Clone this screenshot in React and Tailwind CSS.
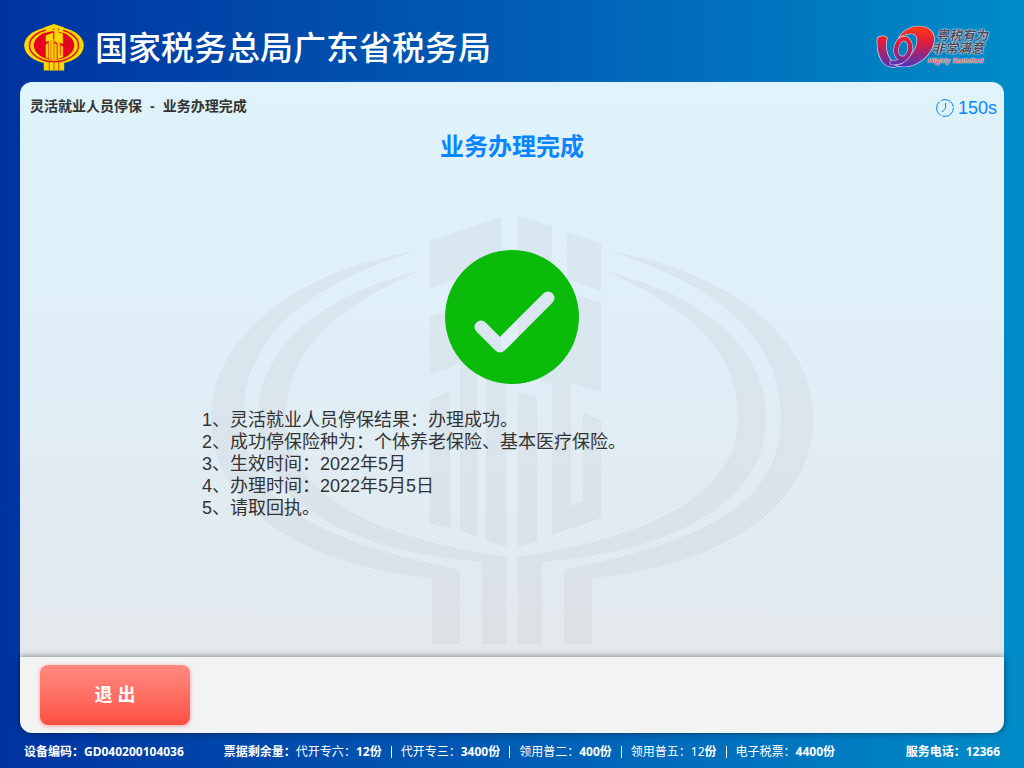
import React from 'react'

const RESULTS = [
  '1、灵活就业人员停保结果：办理成功。',
  '2、成功停保险种为：个体养老保险、基本医疗保险。',
  '3、生效时间：2022年5月',
  '4、办理时间：2022年5月5日',
  '5、请取回执。',
]

const TICKETS = [
  { label: '代开专六', count: '12' },
  { label: '代开专三', count: '3400' },
  { label: '领用普二', count: '400' },
  { label: '领用普五', count: '12', light: true },
  { label: '电子税票', count: '4400' },
]

// One half of the rings plus the two stems, drawn around x = 512
const HALF =
  'M608 251C725 270 813 335 813 418C813 500 735 563 592 578V644H564V570C700 542 781 505 781 418C781 340 720 285 608 251Z' +
  'M608 272C700 295 766 345 766 418C766 500 680 550 542 562V644H518V557C660 536 738 490 738 418C738 350 690 310 608 272Z'

// The 税 glyph in the middle of the emblem
const PILLARS =
  'M430 241L501 217V264L430 288Z' +
  'M518 215L552 226V385L518 372Z' +
  'M567 232L601 243V291L567 279Z' +
  'M430 317L501 292V348L506 350V547L486 540V358L477 361V538L460 529V364L430 374Z' +
  'M430 400L450 391V529L430 523Z' +
  'M518 392L537 398V541L518 547Z' +
  'M552 287L601 303V392L571 383V506L583 501V413L601 420V518L552 535Z'

function EmblemShape() {
  return (
    <>
      <path d={PILLARS} />
      <path d={HALF} />
      <path d={HALF} transform="matrix(-1 0 0 1 1024 0)" />
    </>
  )
}

function Emblem() {
  return (
    <svg className="h-[47px] w-[60px] shrink-0" viewBox="206 208 612 442" preserveAspectRatio="none" aria-hidden="true">
      <ellipse cx="512" cy="410" rx="304" ry="176" fill="#f8d800" />
      <path d="M408 240L512 208L616 240V646H408Z" fill="#f8d800" />
      <ellipse cx="512" cy="410" rx="250" ry="152" fill="none" stroke="#e01020" strokeWidth="15" />
      <ellipse cx="512" cy="410" rx="206" ry="134" fill="#e60020" />
      <path d="M420 556L464 570V640M512 560V640M604 556L560 570V640" fill="none" stroke="#e04010" strokeWidth="10" />
      <g fill="#f8d800" stroke="#f8d800" strokeWidth="5">
        <path d={PILLARS} />
      </g>
    </svg>
  )
}

function SatisfiedLogo() {
  return (
    <div className="flex items-center">
      <svg className="h-11 w-[60px]" viewBox="44 42 178 132" aria-hidden="true">
        <defs>
          <linearGradient id="swirl" x1="0" y1="48" x2="0" y2="168" gradientUnits="userSpaceOnUse">
            <stop offset="0" stopColor="#ff3818" />
            <stop offset="0.4" stopColor="#dc1c3c" />
            <stop offset="1" stopColor="#4a34c0" />
          </linearGradient>
        </defs>
        <g fill="url(#swirl)" stroke="#e4dcf0" strokeWidth="4" strokeLinejoin="round" paintOrder="stroke">
          <path d="M47 86C46 76 68 72 76 80C68 106 76 138 92 152C98 160 108 162 118 158C108 170 84 172 70 160C52 144 46 112 47 86Z" />
          <path d="M112 80C124 58 148 46 172 46C204 47 220 66 217 90C213 126 174 166 126 167C112 167 98 162 94 156C128 158 158 130 166 98C170 76 160 64 144 68C130 69 120 74 112 80Z" />
        </g>
        <g fill="none" strokeLinecap="round">
          <path d="M92 155C134 156 150 122 144 98C136 74 112 80 105 106C99 130 110 146 128 142" stroke="#e4dcf0" strokeWidth="16" />
          <path d="M92 155C134 156 150 122 144 98C136 74 112 80 105 106C99 130 110 146 128 142" stroke="url(#swirl)" strokeWidth="13" />
        </g>
      </svg>
      <div className="-ml-2 flex flex-col italic">
        <span className="pl-2 text-[13px] leading-[13px] font-bold text-[#4c4a5c] [text-shadow:0_0_1px_#fff,0_0_2px_#fff]">
          粤税有为
        </span>
        <span className="pl-1 text-[13px] leading-[13px] font-bold text-[#4c4a5c] [text-shadow:0_0_1px_#fff,0_0_2px_#fff]">
          非常满意
        </span>
        <span className="text-[8px] leading-[11px] text-[#e8203c] [text-shadow:0_0_1px_#fff,0_0_1px_#fff,0_0_2px_#fff]">
          Highly Satisfied
        </span>
      </div>
    </div>
  )
}

function SuccessIcon() {
  return (
    <svg className="size-[134px]" viewBox="0 0 134 134" role="img" aria-label="办理成功">
      <mask id="tick">
        <rect width="134" height="134" fill="#fff" />
        <path d="M36 77L55 96L103 48" fill="none" stroke="#000" strokeWidth="13" strokeLinecap="round" strokeLinejoin="round" />
      </mask>
      <circle cx="67" cy="67" r="67" fill="#0abb0a" mask="url(#tick)" />
    </svg>
  )
}

export default function App() {
  return (
    <div className="flex min-h-screen flex-col bg-linear-to-r from-[#0033a0] via-[#005cb4] to-[#008cc8] font-['Liberation_Sans','Noto_Sans_CJK_SC',sans-serif]">
      {/* Header */}
      <header className="flex h-[82px] shrink-0 items-center justify-between pr-9 pl-6">
        <div className="flex items-center gap-[11px] pt-3">
          <Emblem />
          <h1 className="pt-1 text-[33px] leading-10 font-medium text-white">国家税务总局广东省税务局</h1>
        </div>
        <div className="pt-3">
          <SatisfiedLogo />
        </div>
      </header>

      {/* Card */}
      <main className="mx-5 flex flex-1 flex-col">
        <section className="relative flex flex-1 flex-col overflow-hidden rounded-t-xl bg-linear-to-b from-[#dbf2fb] via-[#dcecf6] to-[#e0e5e9]">
          <div className="absolute inset-0 bg-[linear-gradient(135deg,#ffffff70_0_12%,transparent_12%_38%,#ffffff70_38%_62%,transparent_62%_88%,#ffffff70_88%)] bg-[length:4px_4px]" />
          <svg className="absolute bottom-3 left-1/2 h-[430px] w-[602px] -translate-x-1/2" viewBox="211 215 602 430" aria-hidden="true">
            <g fill="#bcbcc2" fillOpacity="0.16">
              <EmblemShape />
            </g>
          </svg>

          <div className="relative flex h-12 items-center justify-between pr-[7px] pl-[10px]">
            <p className="flex gap-2 text-sm font-bold text-[#333]">
              <span>灵活就业人员停保</span>
              <span>-</span>
              <span>业务办理完成</span>
            </p>
            <div className="flex items-center gap-1 pt-1 text-lg leading-6 text-[#0a84ff]">
              <svg className="size-[18px]" viewBox="0 0 18 18" fill="none" stroke="currentColor" aria-hidden="true">
                <circle cx="9" cy="9" r="8.4" strokeDasharray="16 1.6" />
                <path d="M9.5 4V9.5L6 13" />
              </svg>
              <span>150s</span>
            </div>
          </div>

          <h2 className="relative text-center text-2xl leading-[34px] font-bold text-[#0a84ff]">业务办理完成</h2>

          <div className="relative mt-[86px] flex justify-center">
            <SuccessIcon />
          </div>

          <ul className="relative mx-auto mt-[25px] w-full max-w-[620px] text-lg leading-[22px] text-[#333]">
            {RESULTS.map((line) => (
              <li key={line}>{line}</li>
            ))}
          </ul>
        </section>

        <div className="relative flex h-[76px] shrink-0 items-center rounded-b-xl bg-[#f2f4f4] px-5 shadow-[0_0_6px_rgba(0,0,0,0.5)]">
          <button
            type="button"
            className="h-[60px] w-[150px] rounded-lg bg-linear-to-b from-[#ff8a80] to-[#ff4e44] text-lg font-bold text-white shadow-[0_1px_4px_rgba(255,78,68,0.5)]"
          >
            退 出
          </button>
        </div>
      </main>

      {/* Status line */}
      <footer className="flex h-[35px] shrink-0 items-center px-6 pt-[2px] font-['Noto_Sans','Noto_Sans_CJK_SC',sans-serif] text-xs text-white">
        <span className="font-bold">设备编码：GD040200104036</span>
        <div className="ml-10 flex items-center">
          <span className="font-bold">票据剩余量：</span>
          {TICKETS.map((t, i) => (
            <span key={t.label} className="flex items-center">
              {i > 0 && <span className="mx-[9px] h-3 w-px bg-white" />}
              <span>{t.label}：</span>
              <span className={t.light ? '' : 'font-bold'}>{t.count}</span>
              <span className="font-bold">份</span>
            </span>
          ))}
        </div>
        <span className="ml-auto font-bold">服务电话：12366</span>
      </footer>
    </div>
  )
}
